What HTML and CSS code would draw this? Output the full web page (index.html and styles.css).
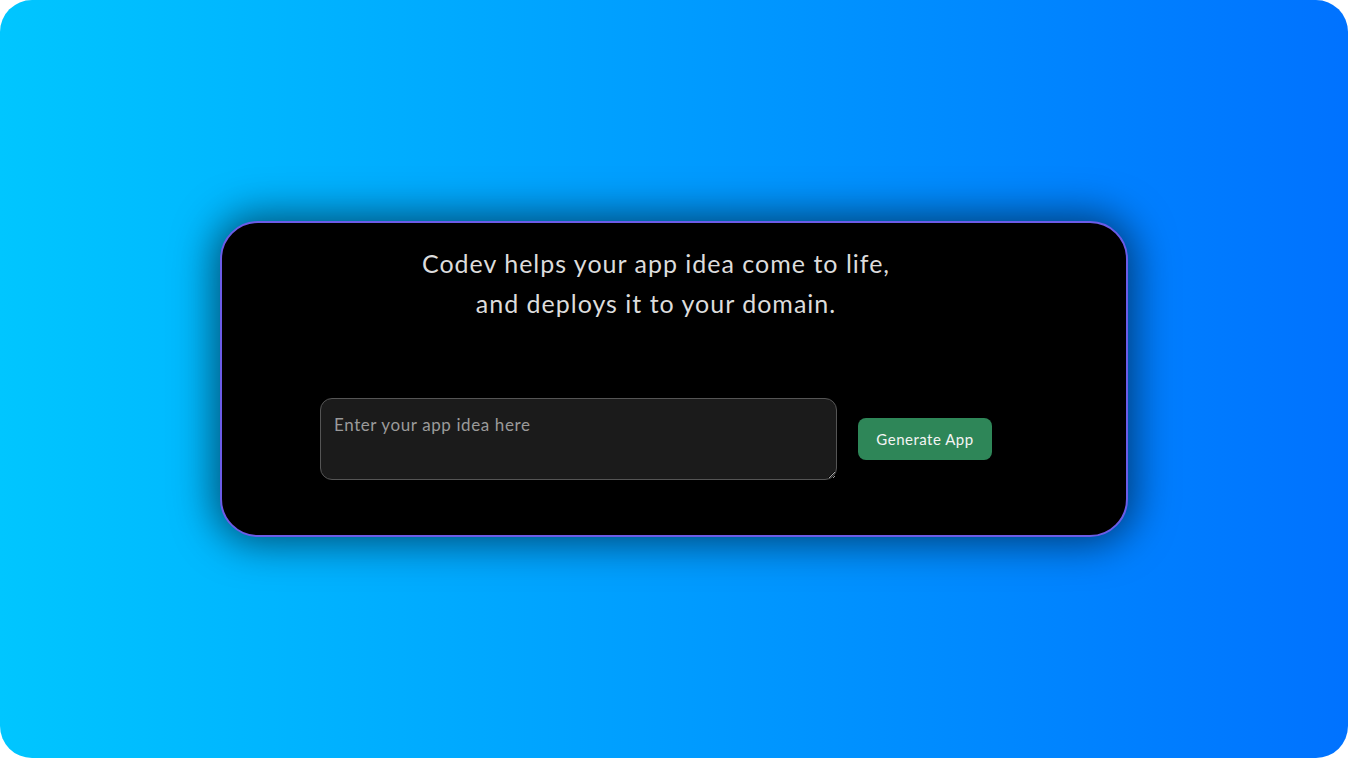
FILE: index.html
```html
<!DOCTYPE html>
<html lang="en">
<head>
<meta charset="utf-8">
<title>Codev</title>
<link rel="stylesheet" href="styles.css">
</head>
<body>
<div class="screen">
  <main class="card">
    <div class="content">
      <p class="tagline">Codev helps your app idea come to life,<br>and deploys it to your domain.</p>
      <div class="form-row">
        <textarea class="idea-input" placeholder="Enter your app idea here"></textarea>
        <button class="generate-btn">Generate App</button>
      </div>
    </div>
  </main>
</div>
</body>
</html>
```

FILE: styles.css
```css
html, body {
  margin: 0;
  padding: 0;
  background: #ffffff;
  height: 100%;
}

.screen {
  height: 758px;
  border-radius: 32px;
  background: linear-gradient(90deg, #00c6ff 0%, #0072ff 100%);
  display: flex;
  align-items: flex-start;
  justify-content: flex-start;
  padding: 221px 0 0 220px;
  box-sizing: border-box;
  overflow: hidden;
}

.card {
  width: 908px;
  height: 316px;
  box-sizing: border-box;
  background: #000;
  border: 2px solid #6b5ce7;
  border-radius: 38px;
  box-shadow: 0 0 40px 6px rgba(0, 0, 0, 0.55);
  padding: 20px 36px 0 0;
  font-family: "Lato", "Liberation Sans", sans-serif;
}

.content {
  display: flex;
  flex-direction: column;
  align-items: center;
}

.tagline {
  margin: 0;
  color: #dcdcdc;
  font-size: 25px;
  line-height: 40px;
  font-weight: 400;
  text-align: center;
  letter-spacing: 1px;
}

.form-row {
  margin-top: 75px;
  display: flex;
  align-items: center;
  gap: 21px;
}

.idea-input {
  width: 517px;
  height: 82px;
  box-sizing: border-box;
  background: #1b1b1b;
  border: 1px solid #555;
  border-radius: 12px;
  padding: 15px 13px;
  color: #eee;
  font-family: "Lato", "Liberation Sans", sans-serif;
  font-size: 17px;
  letter-spacing: 0.6px;
  outline: none;
}

.idea-input::placeholder {
  color: #9a9a9a;
}

.generate-btn {
  width: 134px;
  height: 42px;
  background: #2e8658;
  border: none;
  border-radius: 8px;
  color: #f4f4f4;
  font-family: "Lato", "Liberation Sans", sans-serif;
  font-size: 15px;
  letter-spacing: 0.5px;
  cursor: pointer;
}
```
